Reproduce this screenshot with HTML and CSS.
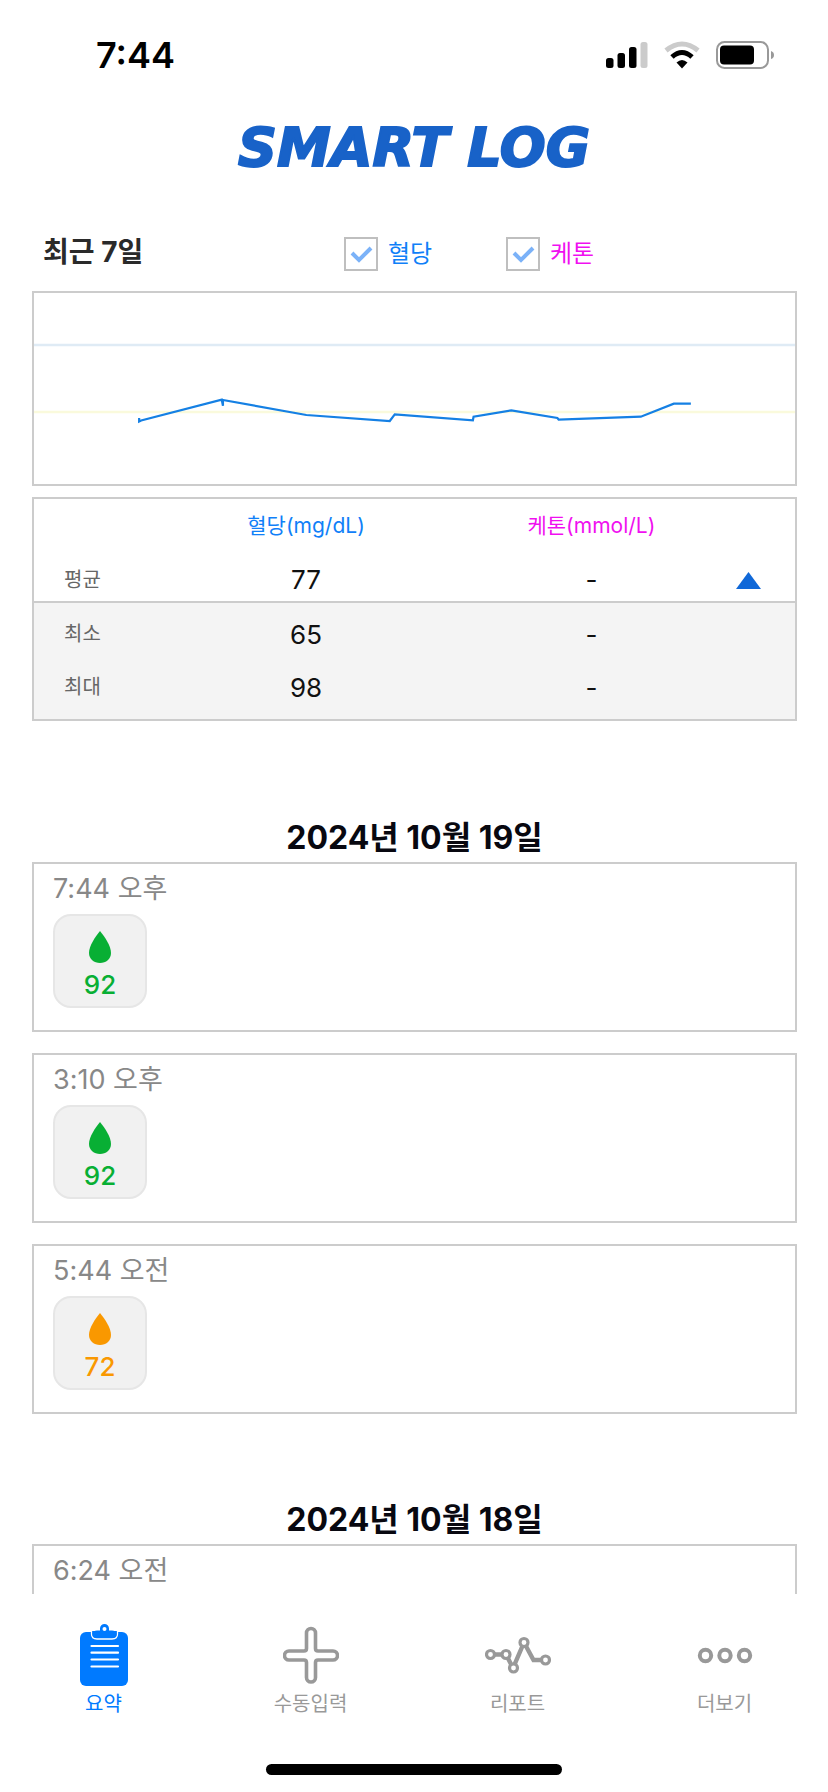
FILE: index.html
```
<!DOCTYPE html>
<html lang="ko">
<head>
    <meta charset="UTF-8">
    <meta name="viewport" content="width=device-width, initial-scale=1.0">
    <title>SMART LOG</title>
    <link rel="stylesheet" href="styles.css">
</head>
<body>
    <div class="status-bar">
        <span class="clock">7:44</span>
        <div class="status-icons">
            <svg class="signal" width="42" height="28" viewBox="0 0 42 28">
                <rect x="0" y="17" width="7.5" height="10" rx="2.5"/>
                <rect x="11.5" y="12" width="7.5" height="15" rx="2.5"/>
                <rect x="23" y="6" width="7.5" height="21" rx="2.5"/>
                <rect x="34.5" y="1" width="7" height="26" rx="2.5" fill="#cbcbcb"/>
            </svg>
            <svg class="wifi" width="36" height="28" viewBox="0 0 36 28">
                <path d="M2 9.5 Q18 -3.5 34 9.5" fill="none" stroke="#cbcbcb" stroke-width="5"/>
                <path d="M8 16 Q18 7 28 16" fill="none" stroke="#000" stroke-width="5"/>
                <path d="M18 27.5 L12.5 21.5 Q18 16.5 23.5 21.5 Z"/>
            </svg>
            <svg class="battery" width="60" height="28" viewBox="0 0 60 28">
                <rect x="1" y="1" width="51" height="26" rx="7.5" fill="none" stroke="#999" stroke-width="2"/>
                <rect x="4" y="4.5" width="34" height="19" rx="4"/>
                <path d="M55 10 Q58 11 58 14 Q58 17 55 18 Z" fill="#999"/>
            </svg>
        </div>
    </div>

    <header>
        <h1>SMART LOG</h1>
    </header>

    <main>
        <div class="filters">
            <h2>최근 7일</h2>
            <label class="glucose"><input type="checkbox" checked>혈당</label>
            <label class="ketone"><input type="checkbox" checked>케톤</label>
        </div>

        <div class="chart">
            <svg viewBox="0 0 760 191" preserveAspectRatio="none">
                <path d="M0 52H760" stroke="#dfebf5" stroke-width="2.5"/>
                <path d="M0 119H760" stroke="#fafadc" stroke-width="2.5"/>
                <polyline points="105,125 105,128.5 107,127.5 187.5,106.7 188.7,112.7 188.7,107 272,122 355.3,128 360.3,121.3 438.3,127.3 439,123.7 476.7,117.3 522.7,125 524,126.7 606,123.7 639,110.7 656,110.7" fill="none" stroke="#1580e4" stroke-width="2.2"/>
            </svg>
        </div>

        <table class="summary">
            <colgroup>
                <col class="col-name">
                <col class="col-value">
                <col class="col-value">
                <col class="col-toggle">
            </colgroup>
            <thead>
                <tr>
                    <td></td>
                    <th class="glucose" scope="col">혈당(mg/dL)</th>
                    <th class="ketone" scope="col">케톤(mmol/L)</th>
                    <td></td>
                </tr>
                <tr class="average">
                    <th scope="row">평균</th>
                    <td>77</td>
                    <td>-</td>
                    <td class="toggle">
                        <button type="button" aria-label="접기">
                            <svg width="25" height="17" viewBox="0 0 25 17"><path d="M12.5 0L25 17H0Z" fill="#1068d8"/></svg>
                        </button>
                    </td>
                </tr>
            </thead>
            <tbody>
                <tr>
                    <th scope="row">최소</th>
                    <td>65</td>
                    <td>-</td>
                    <td></td>
                </tr>
                <tr>
                    <th scope="row">최대</th>
                    <td>98</td>
                    <td>-</td>
                    <td></td>
                </tr>
            </tbody>
        </table>

        <section class="day">
            <h3>2024년 10월 19일</h3>
            <article class="entry">
                <p class="time">7:44 오후</p>
                <div class="reading normal">
                    <svg width="22" height="32" viewBox="0 0 22 32"><path d="M11 0C16 6 22 15 22 22C22 28 17 32 11 32S0 28 0 22C0 15 6 6 11 0Z"/></svg>
                    <span>92</span>
                </div>
            </article>
            <article class="entry">
                <p class="time">3:10 오후</p>
                <div class="reading normal">
                    <svg width="22" height="32" viewBox="0 0 22 32"><path d="M11 0C16 6 22 15 22 22C22 28 17 32 11 32S0 28 0 22C0 15 6 6 11 0Z"/></svg>
                    <span>92</span>
                </div>
            </article>
            <article class="entry">
                <p class="time">5:44 오전</p>
                <div class="reading low">
                    <svg width="22" height="32" viewBox="0 0 22 32"><path d="M11 0C16 6 22 15 22 22C22 28 17 32 11 32S0 28 0 22C0 15 6 6 11 0Z"/></svg>
                    <span>72</span>
                </div>
            </article>
        </section>

        <section class="day">
            <h3>2024년 10월 18일</h3>
            <article class="entry">
                <p class="time">6:24 오전</p>
            </article>
        </section>
    </main>

    <nav>
        <a href="#summary" class="active">
            <svg width="48" height="62" viewBox="0 0 48 62">
                <rect x="0" y="8" width="48" height="54" rx="6" fill="#007aff"/>
                <path d="M11.5 7V10Q11.5 15 17 15H32Q37.5 15 37.5 10V7" fill="#007aff" stroke="#fff" stroke-width="1.3"/>
                <path d="M12.5 9Q13.5 6.500 17 6.5H20V4.5A4.5 4.5 0 0 1 29 4.5V6.5H32Q35.5 6.5 36.5 9V10Q36.5 14 32 14H17Q12.5 14 12.5 10Z" fill="#007aff"/>
                <circle cx="24.5" cy="5" r="2" fill="#fff"/>
                <path d="M11.5 22H38M11.5 28.7H38M11.5 35.5H38M11.5 42.5H38" stroke="#fff" stroke-width="2.2" stroke-linecap="round"/>
            </svg>
            요약
        </a>
        <a href="#input">
            <svg width="56" height="62" viewBox="0 0 56 62">
                <path d="M23.5 9A4.5 4.5 0 0 1 32.5 9V24.5Q32.5 27 35 27H50A4.5 4.5 0 0 1 50 36H35Q32.5 36 32.5 38.5V53.5A4.5 4.5 0 0 1 23.5 53.5V38.5Q23.5 36 21 36H6A4.5 4.5 0 0 1 6 27H21Q23.5 27 23.5 24.5Z" fill="none" stroke="#999" stroke-width="3.6"/>
            </svg>
            수동입력
        </a>
        <a href="#report">
            <svg width="66" height="62" viewBox="0 0 66 62">
                <path d="M5 30.5H21L28 44L39 18.5L48.5 36H61" fill="none" stroke="#999" stroke-width="4.400"/>
                <g fill="#fff" stroke="#999" stroke-width="3.2">
                    <circle cx="5.5" cy="30.5" r="4"/>
                    <circle cx="21" cy="30.5" r="4"/>
                    <circle cx="28.5" cy="44" r="4"/>
                    <circle cx="39" cy="18.5" r="4"/>
                    <circle cx="60.5" cy="36" r="4"/>
                </g>
            </svg>
            리포트
        </a>
        <a href="#more">
            <svg width="56" height="62" viewBox="0 0 56 62">
                <g fill="none" stroke="#999" stroke-width="4">
                    <circle cx="8.5" cy="31.5" r="5.7"/>
                    <circle cx="28" cy="31.5" r="5.7"/>
                    <circle cx="47.5" cy="31.5" r="5.7"/>
                </g>
            </svg>
            더보기
        </a>
    </nav>
    <div class="home-indicator"></div>
</body>
</html>
```
FILE: styles.css
```
* {
    box-sizing: border-box;
}
body {
    display: flex;
    flex-direction: column;
    height: 100vh;
    margin: 0;
    background: white;
    color: #111;
    font-family: Inter, "Noto Sans CJK KR", sans-serif;
}
h1, h2, h3, p {
    margin: 0;
}
.status-bar {
    display: flex;
    justify-content: space-between;
    align-items: center;
    height: 110px;
    padding: 0 52px 0 96px;
}
.clock {
    color: #000;
    font-size: 36px;
    font-weight: 600;
}
.status-icons {
    display: flex;
    gap: 16px;
}
header {
    height: 74px;
    text-align: center;
}
h1 {
    color: #1862c8;
    font-family: "DejaVu Sans", sans-serif;
    font-size: 54px;
    font-style: italic;
    font-weight: bold;
    line-height: 76px;
    -webkit-text-stroke: 2px #1862c8;
}
main {
    flex: 1;
    min-height: 0;
    overflow-y: auto;
    scrollbar-width: none;
    padding: 34px 31px 0 32px;
}
.filters {
    display: flex;
    align-items: center;
    height: 73px;
    padding: 0 11px 2px;
}
.filters h2 {
    flex: 1;
    color: #2a2a2a;
    font-size: 28px;
    font-weight: 700;
    line-height: 34px;
    padding-bottom: 4px;
}
.filters label {
    display: flex;
    align-items: center;
    gap: 10px;
    width: 162px;
    font-size: 24px;
    line-height: 32px;
}
.filters .ketone {
    width: 280px;
}
.filters input {
    appearance: none;
    width: 34px;
    height: 34px;
    margin: 0;
    border: 2px solid #bfbfbf;
}
.filters input:checked {
    background: url("data:image/svg+xml,%3Csvg xmlns='http://www.w3.org/2000/svg' viewBox='0 0 30 30'%3E%3Cpath d='M6 14l7 7L25 9' fill='none' stroke='%237bb2f8' stroke-width='4'/%3E%3C/svg%3E");
}
.glucose {
    color: #1080f8;
}
.ketone {
    color: #f010f0;
}
.chart {
    height: 195px;
    border: 2px solid #ccc;
    margin-bottom: 11px;
}
.chart svg {
    display: block;
    width: 100%;
    height: 100%;
}
.summary {
    width: 100%;
    table-layout: fixed;
    border: 2px solid #ccc;
    border-spacing: 0;
    font-size: 26px;
    line-height: 53px;
    text-align: center;
}
.col-name {
    width: 17%;
}
.col-value {
    width: 37.5%;
}
.col-toggle {
    width: 8%;
}
.summary th,
.summary td {
    padding: 0;
    font-weight: 400;
}
.summary th {
    font-size: 21px;
}
.summary th[scope="row"] {
    padding-left: 30px;
    color: #666;
    font-size: 20px;
    text-align: left;
}
.summary .average > * {
    padding-top: 7px;
    line-height: 42px;
}
.toggle button {
    display: block;
    margin: 0 34px 0 auto;
    padding: 0;
    border: none;
    background: none;
    cursor: pointer;
}
.toggle svg {
    display: block;
}
.summary tbody {
    background: #f4f4f4;
}
.summary tbody tr:first-child > * {
    border-top: 2px solid #ccc;
    padding-top: 5px;
}
.summary tbody tr:last-child > * {
    padding-bottom: 5px;
}
.day {
    padding-top: 92px;
}
.day + .day {
    padding-top: 81px;
}
.day h3 {
    color: #080810;
    font-size: 32px;
    font-weight: 700;
    line-height: 49px;
    text-align: center;
}
.entry {
    height: 170px;
    padding: 6px 19px;
    border: 2px solid #ccc;
    margin-bottom: 21px;
}
.entry:last-child {
    margin-bottom: 0;
}
.time {
    color: #888;
    font-size: 27px;
    line-height: 38px;
}
.reading {
    display: flex;
    flex-direction: column;
    align-items: center;
    width: 94px;
    height: 94px;
    padding-top: 15px;
    margin-top: 6px;
    border: 2px solid #e6e6e6;
    border-radius: 18px;
    background: #f1f1f1;
    font-size: 26px;
    font-weight: 500;
    line-height: 32px;
}
.reading span {
    margin-top: 6px;
}
.reading svg {
    fill: currentColor;
}
.normal {
    color: #08af34;
}
.low {
    color: #f99800;
}
nav {
    display: grid;
    grid-template-columns: repeat(4, 1fr);
    padding: 30px 0 42px;
    background: white;
}
nav a {
    display: flex;
    flex-direction: column;
    align-items: center;
    color: #999;
    font-size: 20px;
    line-height: 36px;
    text-decoration: none;
}
nav a.active {
    color: #007aff;
}
.home-indicator {
    width: 296px;
    height: 11px;
    margin: 0 auto 17px;
    border-radius: 6px;
    background: #000;
}
```
